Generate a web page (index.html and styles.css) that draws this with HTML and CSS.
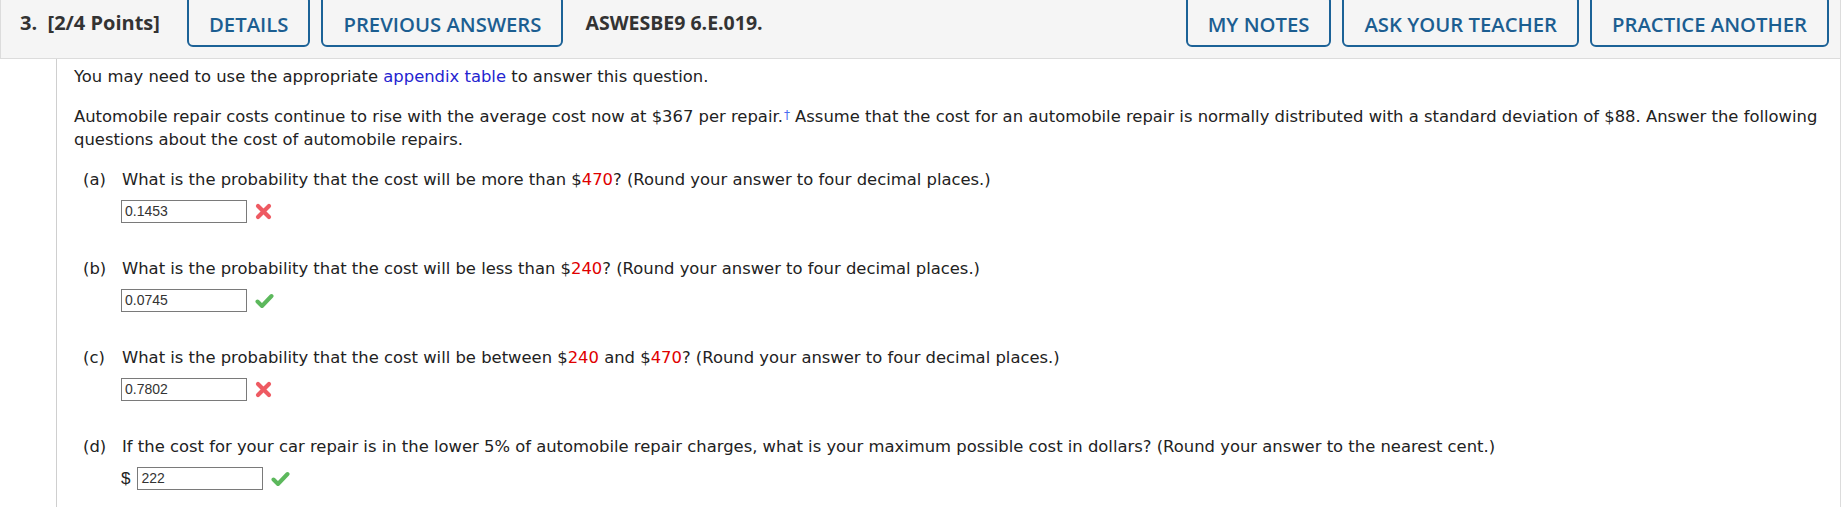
FILE: index.html
```html
<!DOCTYPE html>
<html lang="en">
<head>
<meta charset="utf-8">
<title>Question 3</title>
<link rel="stylesheet" href="styles.css">
</head>
<body>
<div class="question">
  <div class="header">
    <div class="qnum">3.&nbsp; [2/4 Points]</div>
    <button class="btn">DETAILS</button>
    <button class="btn">PREVIOUS ANSWERS</button>
    <div class="qcode">ASWESBE9 6.E.019.</div>
    <div class="spacer"></div>
    <button class="btn">MY NOTES</button>
    <button class="btn">ASK YOUR TEACHER</button>
    <button class="btn">PRACTICE ANOTHER</button>
  </div>
  <div class="body">
    <p class="para">You may need to use the appropriate <a class="link" href="#">appendix table</a> to answer this question.</p>
    <p class="para">Automobile repair costs continue to rise with the average cost now at $367 per repair.<sup class="dagger">†</sup> Assume that the cost for an automobile repair is normally distributed with a standard deviation of $88. Answer the following questions about the cost of automobile repairs.</p>

    <div class="part">
      <div class="plabel">(a)</div>
      <div class="ptext">What is the probability that the cost will be more than $<span class="red">470</span>? (Round your answer to four decimal places.)</div>
      <div class="answer">
        <span class="field">0.1453</span>
        <svg class="icon" width="17" height="17" viewBox="0 0 17 17"><path d="M3 3 L14 14 M14 3 L3 14" stroke="#ee5a62" stroke-width="4.2" stroke-linecap="round"/></svg>
      </div>
    </div>

    <div class="part">
      <div class="plabel">(b)</div>
      <div class="ptext">What is the probability that the cost will be less than $<span class="red">240</span>? (Round your answer to four decimal places.)</div>
      <div class="answer">
        <span class="field">0.0745</span>
        <svg class="icon" width="19" height="17" viewBox="0 0 19 17"><path d="M2.5 9.5 L7 14 L16.5 4" fill="none" stroke="#5cb85c" stroke-width="4" stroke-linecap="round" stroke-linejoin="round"/></svg>
      </div>
    </div>

    <div class="part">
      <div class="plabel">(c)</div>
      <div class="ptext">What is the probability that the cost will be between $<span class="red">240</span> and $<span class="red">470</span>? (Round your answer to four decimal places.)</div>
      <div class="answer">
        <span class="field">0.7802</span>
        <svg class="icon" width="17" height="17" viewBox="0 0 17 17"><path d="M3 3 L14 14 M14 3 L3 14" stroke="#ee5a62" stroke-width="4.2" stroke-linecap="round"/></svg>
      </div>
    </div>

    <div class="part">
      <div class="plabel">(d)</div>
      <div class="ptext">If the cost for your car repair is in the lower 5% of automobile repair charges, what is your maximum possible cost in dollars? (Round your answer to the nearest cent.)</div>
      <div class="answer">
        <span class="dollar">$</span>
        <span class="field">222</span>
        <svg class="icon" width="19" height="17" viewBox="0 0 19 17"><path d="M2.5 9.5 L7 14 L16.5 4" fill="none" stroke="#5cb85c" stroke-width="4" stroke-linecap="round" stroke-linejoin="round"/></svg>
      </div>
    </div>
  </div>
</div>
</body>
</html>
```
FILE: styles.css
```css
html, body {
  margin: 0;
  padding: 0;
  background: #ffffff;
}

.question {
  width: 1841px;
}

.header {
  display: flex;
  align-items: flex-start;
  height: 58px;
  background: #f5f5f5;
  border-left: 1px solid #dcdcdc;
  border-bottom: 1px solid #dcdcdc;
  border-right: 1px solid #dcdcdc;
  box-sizing: content-box;
  font-family: "Open Sans", "Liberation Sans", sans-serif;
  overflow: hidden;
}

.qnum {
  font-weight: 700;
  font-size: 20px;
  color: #333333;
  margin-left: 19px;
  line-height: 45px;
  width: 167px;
  white-space: nowrap;
}

.btn {
  font-family: "Open Sans", "Liberation Sans", sans-serif;
  font-size: 20.3px;
  font-weight: 600;
  color: #1c5e91;
  background: #f5f5f5;
  border: 2px solid #1c6297;
  border-radius: 6px;
  height: 52px;
  margin-top: -5px;
  padding: 5px 20px 0;
  margin-right: 11px;
  line-height: 40px;
}

.qcode {
  font-weight: 700;
  font-size: 19.5px;
  color: #333333;
  line-height: 45px;
  margin-left: 11px;
}

.spacer {
  flex: 1;
}

.header .btn:last-child {
  margin-right: 11px;
}

.body {
  margin-left: 56px;
  border-left: 1px solid #cfcfcf;
  border-right: 1px solid #dcdcdc;
  padding: 6px 10px 20px 17px;
  font-family: "DejaVu Sans", Verdana, sans-serif;
  font-size: 16.4px;
  line-height: 23px;
  color: #222222;
}

.para {
  margin: 0 0 17px 0;
}

.link {
  color: #2424d0;
  text-decoration: none;
}

.dagger {
  color: #4a6cf0;
  font-size: 12px;
  line-height: 0;
  vertical-align: 3px;
  margin-left: 1px;
}

.part {
  display: grid;
  grid-template-columns: 39px 1fr;
  padding-left: 9px;
  margin-bottom: 34px;
}

.plabel {
  grid-column: 1;
}

.ptext {
  grid-column: 2;
}

.red {
  color: #e00000;
}

.answer {
  grid-column: 2;
  display: flex;
  align-items: center;
  margin-top: 9px;
  margin-left: -1px;
  gap: 8px;
}

.field {
  display: inline-block;
  box-sizing: border-box;
  width: 126px;
  height: 23px;
  border: 1px solid #7a7a7a;
  font-family: "Liberation Sans", Arial, sans-serif;
  font-size: 14px;
  line-height: 21px;
  padding-left: 3px;
  color: #333333;
  background: #ffffff;
}

.dollar {
  font-family: "Liberation Sans", Arial, sans-serif;
  font-size: 17px;
  margin-right: -1px;
}

.icon {
  display: block;
}
```
